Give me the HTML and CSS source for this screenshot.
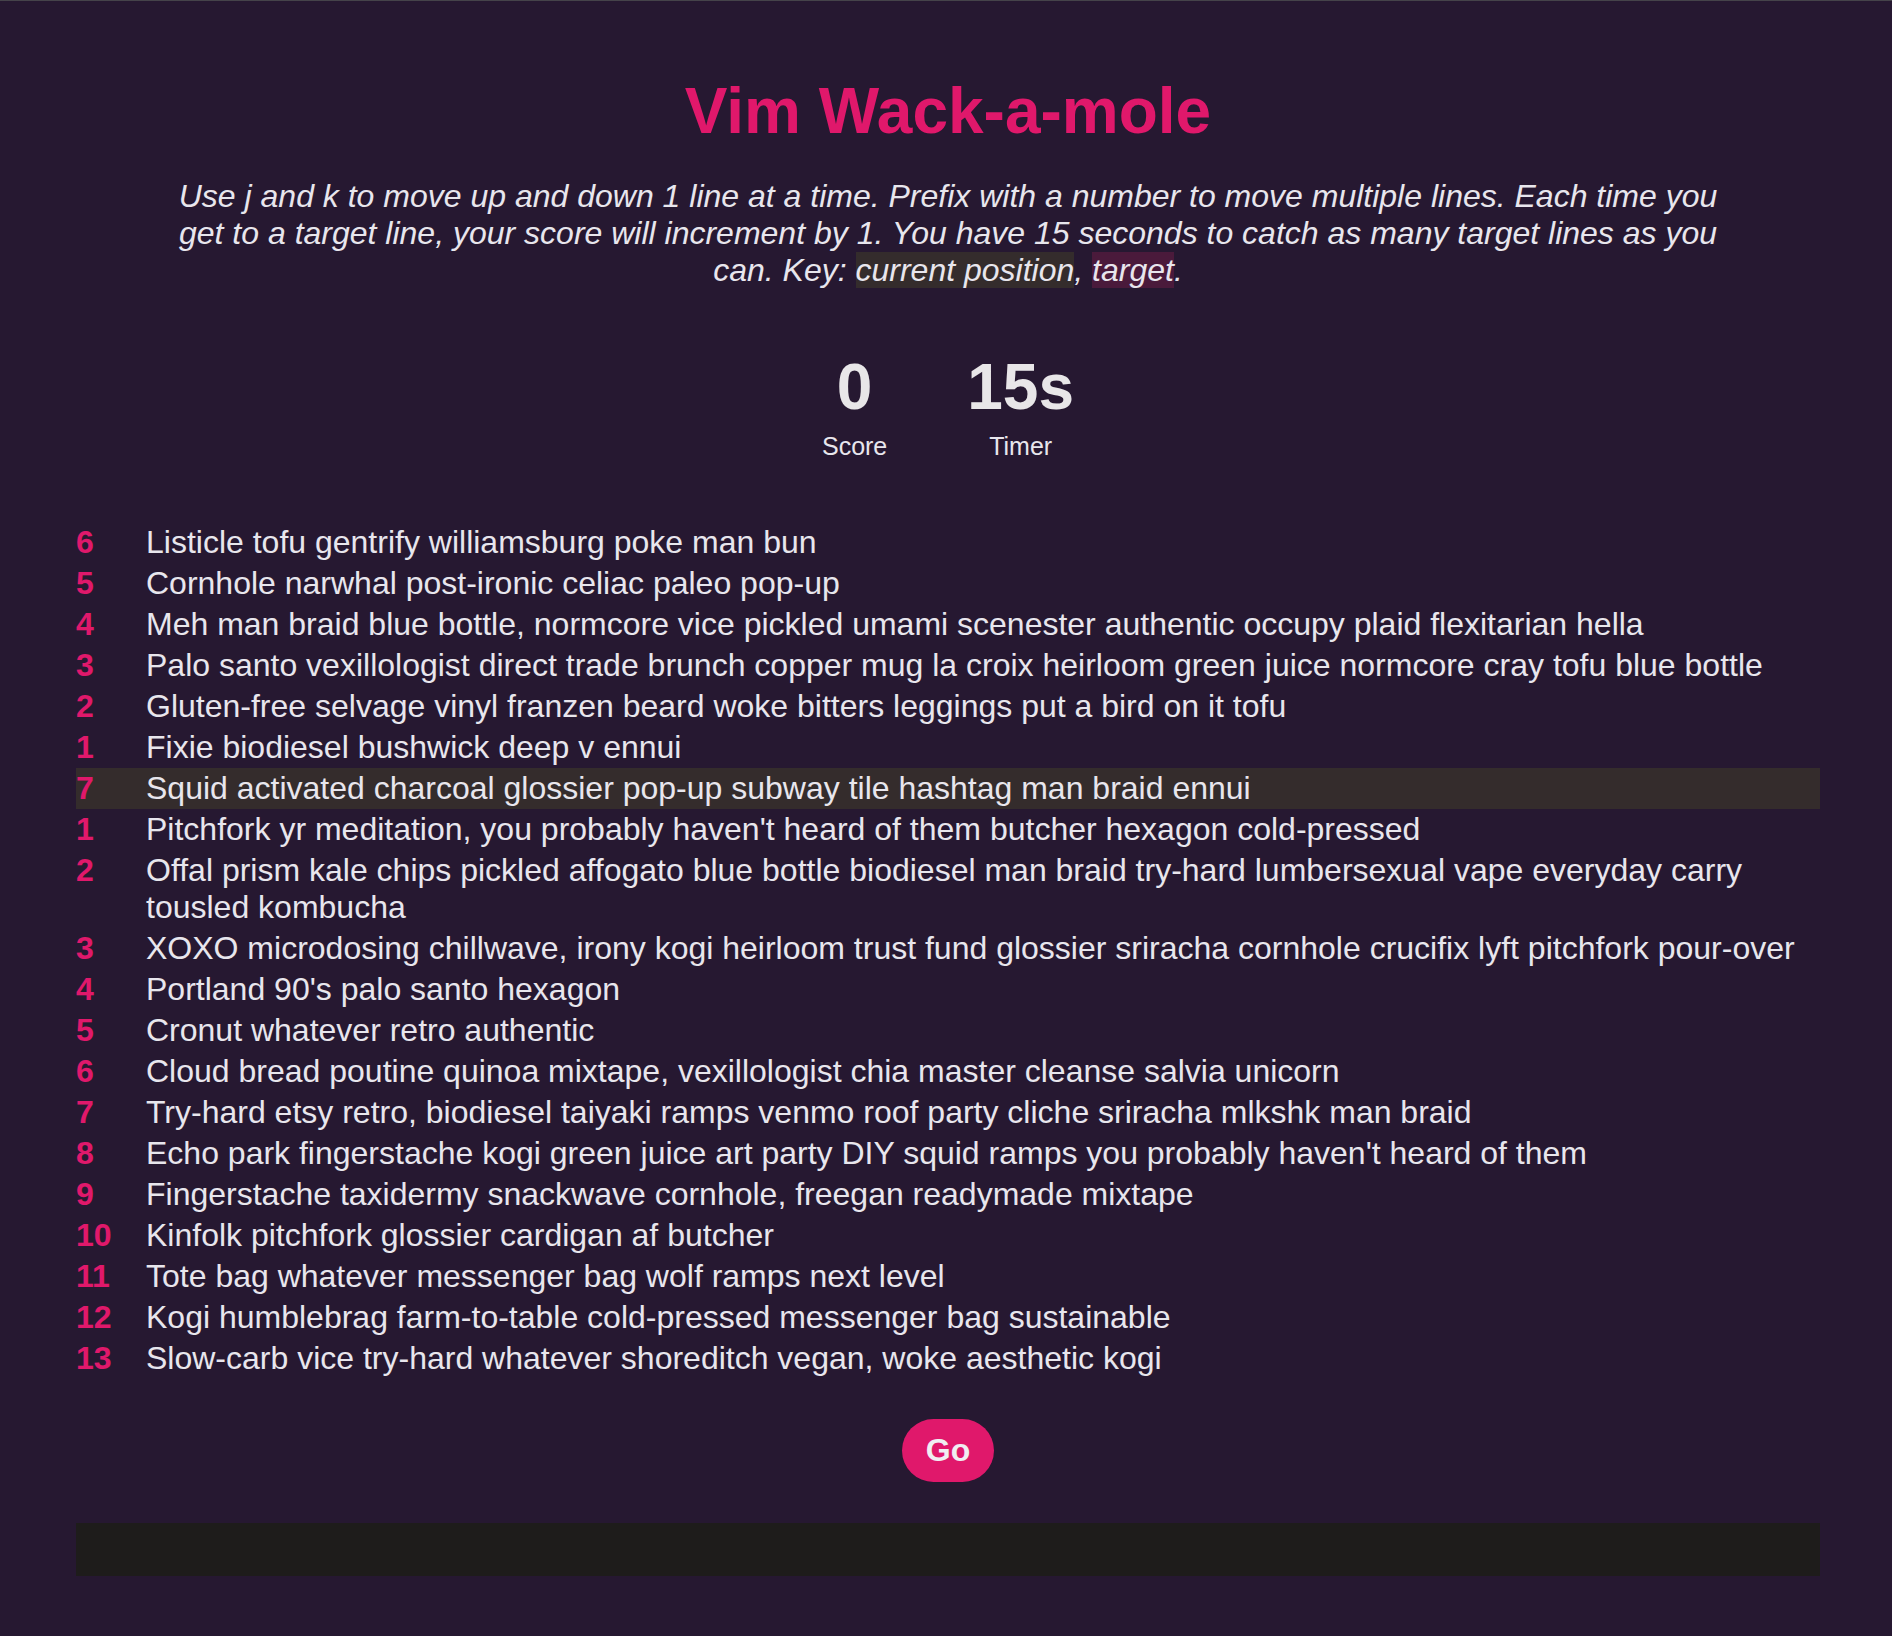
FILE: index.html
```html
<!DOCTYPE html>
<html lang="en">
<head>
<meta charset="utf-8">
<title>Vim Wack-a-mole</title>
<link rel="stylesheet" href="styles.css">
</head>
<body>
<main class="page">
  <h1 class="title">Vim Wack-a-mole</h1>
  <p class="intro">Use j and k to move up and down 1 line at a time. Prefix with a number to move multiple lines. Each time you get to a target line, your score will increment by 1. You have 15 seconds to catch as many target lines as you can. Key: <span class="key-current">current position</span>, <span class="key-target">target</span>.</p>

  <div class="stats">
    <div class="stat">
      <div class="stat-value">0</div>
      <div class="stat-label">Score</div>
    </div>
    <div class="stat">
      <div class="stat-value">15s</div>
      <div class="stat-label">Timer</div>
    </div>
  </div>

  <ol class="lines">
    <li class="line"><span class="num">6</span><span class="text">Listicle tofu gentrify williamsburg poke man bun</span></li>
    <li class="line"><span class="num">5</span><span class="text">Cornhole narwhal post-ironic celiac paleo pop-up</span></li>
    <li class="line"><span class="num">4</span><span class="text">Meh man braid blue bottle, normcore vice pickled umami scenester authentic occupy plaid flexitarian hella</span></li>
    <li class="line"><span class="num">3</span><span class="text">Palo santo vexillologist direct trade brunch copper mug la croix heirloom green juice normcore cray tofu blue bottle</span></li>
    <li class="line"><span class="num">2</span><span class="text">Gluten-free selvage vinyl franzen beard woke bitters leggings put a bird on it tofu</span></li>
    <li class="line"><span class="num">1</span><span class="text">Fixie biodiesel bushwick deep v ennui</span></li>
    <li class="line current"><span class="num">7</span><span class="text">Squid activated charcoal glossier pop-up subway tile hashtag man braid ennui</span></li>
    <li class="line"><span class="num">1</span><span class="text">Pitchfork yr meditation, you probably haven't heard of them butcher hexagon cold-pressed</span></li>
    <li class="line"><span class="num">2</span><span class="text">Offal prism kale chips pickled affogato blue bottle biodiesel man braid try-hard lumbersexual vape everyday carry tousled kombucha</span></li>
    <li class="line"><span class="num">3</span><span class="text">XOXO microdosing chillwave, irony kogi heirloom trust fund glossier sriracha cornhole crucifix lyft pitchfork pour-over</span></li>
    <li class="line"><span class="num">4</span><span class="text">Portland 90's palo santo hexagon</span></li>
    <li class="line"><span class="num">5</span><span class="text">Cronut whatever retro authentic</span></li>
    <li class="line"><span class="num">6</span><span class="text">Cloud bread poutine quinoa mixtape, vexillologist chia master cleanse salvia unicorn</span></li>
    <li class="line"><span class="num">7</span><span class="text">Try-hard etsy retro, biodiesel taiyaki ramps venmo roof party cliche sriracha mlkshk man braid</span></li>
    <li class="line"><span class="num">8</span><span class="text">Echo park fingerstache kogi green juice art party DIY squid ramps you probably haven't heard of them</span></li>
    <li class="line"><span class="num">9</span><span class="text">Fingerstache taxidermy snackwave cornhole, freegan readymade mixtape</span></li>
    <li class="line"><span class="num">10</span><span class="text">Kinfolk pitchfork glossier cardigan af butcher</span></li>
    <li class="line"><span class="num">11</span><span class="text">Tote bag whatever messenger bag wolf ramps next level</span></li>
    <li class="line"><span class="num">12</span><span class="text">Kogi humblebrag farm-to-table cold-pressed messenger bag sustainable</span></li>
    <li class="line"><span class="num">13</span><span class="text">Slow-carb vice try-hard whatever shoreditch vegan, woke aesthetic kogi</span></li>
  </ol>

  <div class="actions">
    <button class="go-btn" type="button">Go</button>
  </div>

  <div class="log"></div>
</main>
</body>
</html>
```

FILE: styles.css
```css
html, body {
  margin: 0;
  padding: 0;
}

body {
  background: #261831;
  color: #e8e6ed;
  font-family: "Liberation Sans", Arial, sans-serif;
  border-top: 1px solid #45434a;
  min-height: 1635px;
}

.page {
  margin: 0 72px 0 76px;
  padding-top: 73px;
}

.title {
  margin: 0;
  font-size: 64px;
  font-weight: bold;
  line-height: normal;
  color: #e0186b;
  text-align: center;
}

.intro {
  max-width: 1584px;
  margin: 30px auto 0;
  font-size: 32px;
  font-style: italic;
  line-height: normal;
  text-align: center;
  color: #e8e6ed;
}

.key-current {
  background: #342c2c;
}

.key-target {
  background: #4a1a3b;
}

.stats {
  display: flex;
  justify-content: center;
  gap: 80px;
  margin-top: 61px;
}

.stat {
  display: flex;
  flex-direction: column;
  align-items: center;
}

.stat-value {
  font-size: 64px;
  font-weight: bold;
  line-height: normal;
  color: #e8e6e8;
}

.stat-label {
  margin-top: 8px;
  font-size: 25px;
  line-height: normal;
  color: #e8e6ed;
}

.lines {
  list-style: none;
  margin: 61px 0 0;
  padding: 0;
}

.line {
  display: grid;
  grid-template-columns: 70px 1fr;
  padding: 2px 0;
  font-size: 32px;
  line-height: normal;
}

.line.current {
  background: #342c2c;
}

.num {
  font-weight: bold;
  color: #e0186b;
}

.text {
  color: #e8e6ed;
}

.actions {
  display: flex;
  justify-content: center;
  margin-top: 40px;
}

.go-btn {
  font-family: "Liberation Sans", Arial, sans-serif;
  font-size: 32px;
  font-weight: bold;
  line-height: normal;
  color: #f0eef2;
  background: #e0186b;
  border: none;
  border-radius: 999px;
  padding: 13px 24px;
  cursor: pointer;
}

.log {
  margin-top: 41px;
  height: 53px;
  background: #1e1c1b;
}
```
